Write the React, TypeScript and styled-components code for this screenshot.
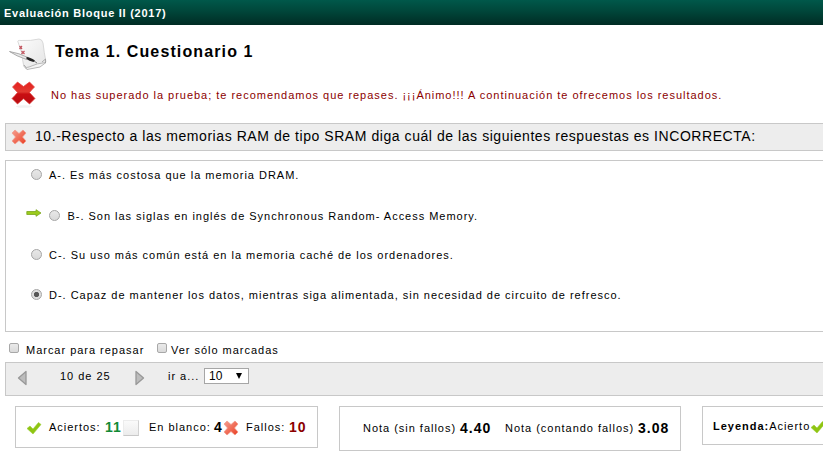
import React from "react";
import styled, { createGlobalStyle } from "styled-components";

const GlobalStyle = createGlobalStyle`
  * { box-sizing: border-box; }
  svg { flex: none; }
  body {
    margin: 0;
    background: #fff;
    overflow: hidden;
    color: #000;
    font: 11px/14px Arial, "Liberation Sans", sans-serif;
    letter-spacing: 0.98px;
  }
`;

const Page = styled.div`
  width: 100%;
  height: 462px;
  overflow: hidden;
  white-space: nowrap;
`;

const Header = styled.header`
  height: 25px;
  padding: 7px 0 0 4px;
  background: linear-gradient(#00584a, #00463a 45%, #002c24);
  color: #fff;
  font-size: 11px;
  line-height: 13px;
  font-weight: bold;
  letter-spacing: 0.74px;
`;

const TitleRow = styled.div`
  display: flex;
  height: 50px;
  padding: 13px 0 0 9px;
`;

const Title = styled.h1`
  margin: 5px 0 0 8px;
  font-size: 16px;
  line-height: 18px;
  letter-spacing: 1.12px;
`;

const Notice = styled.div`
  display: flex;
  height: 48px;
  padding: 5px 0 0 11px;
  color: #8b0000;
`;

const NoticeText = styled.p`
  margin: 8px 0 0 15px;
`;

const Question = styled.div`
  display: flex;
  height: 28px;
  margin-left: 5px;
  padding: 5px 0 0 5px;
  border: 1px solid #c8c8c8;
  border-right: 0;
  background: #ededed;
`;

const QuestionText = styled.h2`
  margin: 0 0 0 8px;
  font-size: 14px;
  font-weight: normal;
  line-height: 15px;
  letter-spacing: 0.56px;
`;

const Options = styled.div`
  height: 172px;
  margin: 9px 0 0 5px;
  padding: 7px 0 0 20px;
  border: 1px solid #c8c8c8;
  border-right: 0;
`;

const Option = styled.label<{ $height: number; $indent: number }>`
  display: flex;
  height: ${(p) => p.$height}px;
  padding-left: ${(p) => p.$indent}px;
`;

const OptionText = styled.span<{ $gap: number }>`
  margin-left: ${(p) => p.$gap}px;
`;

const ArrowSlot = styled.span`
  width: 22.5px;
  height: 14px;
  margin-top: -2px;
`;

const Radio = styled.input.attrs({ type: "radio" })`
  appearance: none;
  flex: none;
  width: 11px;
  height: 11px;
  margin: 0.5px 0 0;
  border: 1px solid #a5a5a5;
  border-radius: 50%;
  background: linear-gradient(#e8e8e8, #d9d9d9);
  &:checked {
    background: radial-gradient(circle, #555 0 2.2px, #dedede 3px);
  }
`;

const Filters = styled.div`
  display: flex;
  height: 30px;
  padding: 11px 0 0 9px;
`;

const FilterLabel = styled.span<{ $left: number; $width: number }>`
  width: ${(p) => p.$width}px;
  margin-left: ${(p) => p.$left}px;
`;

const Checkbox = styled.input.attrs({ type: "checkbox" })`
  appearance: none;
  width: 10px;
  height: 10px;
  margin: 0;
  border: 1px solid #a8a8a8;
  border-radius: 2px;
  background: linear-gradient(#eaeaea, #dadada);
`;

const Pager = styled.nav`
  display: flex;
  height: 34px;
  margin-left: 5px;
  padding: 6px 0 0 11px;
  border: 1px solid #c8c8c8;
  border-right: 0;
  background: #ededed;
`;

const PagerArrow = styled.button`
  width: 11px;
  height: 16px;
  margin: 1px 0 0;
  padding: 0;
  border: 0;
  background: none;
`;

const PagerText = styled.span<{ $left: number; $width: number }>`
  width: ${(p) => p.$width}px;
  margin-left: ${(p) => p.$left}px;
`;

const Select = styled.button`
  display: flex;
  justify-content: space-between;
  width: 45px;
  height: 16px;
  margin-top: -1px;
  padding: 0 6px 0 4px;
  border: 1px solid #a6a6a6;
  background: #fff;
  color: #000;
  font: 12px/14px Arial, "Liberation Sans", sans-serif;
  letter-spacing: 0;
`;

const Caret = styled.span`
  width: 0;
  height: 0;
  margin-top: 4px;
  border: 3.5px solid transparent;
  border-top: 6px solid #000;
  border-bottom: 0;
`;

const Summary = styled.div`
  display: flex;
  align-items: flex-start;
  gap: 21px;
  padding: 10px 0 0 15px;
`;

const Panel = styled.section<{ $width: number; $height: number; $pad: string }>`
  display: flex;
  flex: none;
  width: ${(p) => p.$width}px;
  height: ${(p) => p.$height}px;
  padding: ${(p) => p.$pad};
  border: 1px solid #c8c8c8;
`;

const Label = styled.span<{ $width: number }>`
  flex: none;
  width: ${(p) => p.$width}px;
`;

const Value = styled.b<{ $width: number; $color?: string }>`
  flex: none;
  width: ${(p) => p.$width}px;
  color: ${(p) => p.$color ?? "#000"};
  font-size: 14px;
  letter-spacing: 1px;
`;

const IconSlot = styled.span<{ $width: number }>`
  flex: none;
  width: ${(p) => p.$width}px;
  svg { display: block; }
`;

const Blank = styled.span`
  flex: none;
  width: 16px;
  height: 16px;
  margin-right: 10px;
  border: 1px solid #ececec;
  border-right-color: #d2d2d2;
  border-bottom-color: #c8c8c8;
  background: linear-gradient(#fafafa, #ececec);
`;

const PaperIcon = () => (
  <svg width="38" height="34" viewBox="0 0 38 34">
    <defs>
      <linearGradient id="paper" x2="1" y2="1">
        <stop stopColor="#fcfcfc" />
        <stop offset="1" stopColor="#e4e4e4" />
      </linearGradient>
    </defs>
    <path d="M9 4Q8 2 12 2.500Q22 3 30 1Q33 1 34 5Q35 14 37 24L30 29 17 31Q14 29 14 24Q13 13 9 4Z" fill="url(#paper)" stroke="#cfcfcf" strokeWidth=".8" />
    <path d="M15 27Q17 31 20 29Q28 25 37 24.500L31 29 18 31.500Z" fill="#f4f4f4" stroke="#aaa" strokeWidth=".8" />
    <path d="M33 24 36.500 21V25" fill="none" stroke="#999" strokeWidth=".8" />
    <path d="M10.500 8 13 11M13 8 10.500 11M12.500 13 15.500 16M15.500 13 12.500 16" stroke="#c2555f" strokeWidth="1.2" />
    <path d="M.5 13.500Q10 15 19 19.500L17.500 21.500Q7 18 .5 13.500Z" fill="#e8e8e8" stroke="#999" strokeWidth=".8" />
    <path d="M17.500 19Q21 19 26 22.500L24.500 24Q20 23 17.500 21Z" fill="#222" />
    <path d="M25 23 28 25" stroke="#777" />
  </svg>
);

const BigCross = () => (
  <svg width="25" height="28" viewBox="0 0 25 28">
    <defs>
      <linearGradient id="red" x2="0" y2="1">
        <stop stopColor="#e8201f" />
        <stop offset=".45" stopColor="#e03a30" />
        <stop offset=".55" stopColor="#c90e12" />
        <stop offset="1" stopColor="#b80c12" />
      </linearGradient>
    </defs>
    <ellipse cx="13" cy="26.500" rx="8" ry="1.300" fill="#f2f2f2" />
    <path d="M6.500 2 12.500 6.500 18.500 2 23.500 7Q20.500 10 18.500 12.500L24 18.500 18.500 24 12.500 18.800 6.500 24 1 18.500Q4 15.500 6.500 12.500L1.500 7Z" fill="url(#red)" stroke="#df4640" strokeWidth=".7" strokeLinejoin="round" />
  </svg>
);

const SmallCross = () => (
  <svg width="16" height="16" viewBox="0 0 16 16">
    <defs>
      <linearGradient id="coral" x2="1" y2="1">
        <stop stopColor="#f5a091" />
        <stop offset=".6" stopColor="#ef6650" />
        <stop offset="1" stopColor="#e93d21" />
      </linearGradient>
    </defs>
    <path d="M4 1 8 4.500 12 1 15 4 11.500 8 15 12 12 15 8 11.500 4 15 1 12 4.500 8 1 4Z" fill="url(#coral)" stroke="#f09a8a" strokeWidth=".7" strokeLinejoin="round" />
  </svg>
);

const Check = () => (
  <svg width="16" height="16" viewBox="0 0 16 16">
    <path d="M1 8.500 4 6 7 9 12.500 2.500 15 4.500 7 14Z" fill="#8fc512" stroke="#9ccd34" strokeWidth=".6" />
  </svg>
);

const GreenArrow = () => (
  <svg width="16" height="10" viewBox="0 0 16 10">
    <path d="M.8 3.500H10V1.700L15 5 10 8.300V6.500H.8Z" fill="#9bcb1c" stroke="#7aa51c" strokeWidth=".8" strokeLinejoin="round" />
  </svg>
);

const Triangle = ({ back = false }: { back?: boolean }) => (
  <svg width="11" height="16" viewBox="0 0 11 16">
    <path d={back ? "M9 1.500V14.500L1.500 8Z" : "M2 1.500V14.500L9.500 8Z"} fill="#bcbcbc" stroke="#989898" strokeWidth="1.300" strokeLinejoin="round" />
  </svg>
);

const options = [
  { text: "A-. Es más costosa que la memoria DRAM.", height: 41, indent: 4.5, gap: 7.5 },
  { text: "B-. Son las siglas en inglés de Synchronous Random- Access Memory.", height: 39, indent: 0, gap: 8, correct: true },
  { text: "C-. Su uso más común está en la memoria caché de los ordenadores.", height: 40, indent: 4.5, gap: 7.5 },
  { text: "D-. Capaz de mantener los datos, mientras siga alimentada, sin necesidad de circuito de refresco.", height: 30, indent: 4.5, gap: 7.5, selected: true },
];

export default function App() {
  return (
    <Page>
      <GlobalStyle />
      <Header>Evaluación Bloque II (2017)</Header>
      <TitleRow>
        <PaperIcon />
        <Title>Tema 1. Cuestionario 1</Title>
      </TitleRow>
      <Notice>
        <BigCross />
        <NoticeText>
          No has superado la prueba; te recomendamos que repases. ¡¡¡Ánimo!!! A continuación te ofrecemos los resultados.
        </NoticeText>
      </Notice>
      <Question>
        <SmallCross />
        <QuestionText>10.-Respecto a las memorias RAM de tipo SRAM diga cuál de las siguientes respuestas es INCORRECTA:</QuestionText>
      </Question>
      <Options>
        {options.map((o) => (
          <Option key={o.text} $height={o.height} $indent={o.indent}>
            {o.correct && <ArrowSlot><GreenArrow /></ArrowSlot>}
            <Radio name="answer" defaultChecked={!!o.selected} />
            <OptionText $gap={o.gap}>{o.text}</OptionText>
          </Option>
        ))}
      </Options>
      <Filters>
        <Checkbox />
        <FilterLabel $left={7} $width={131}>Marcar para repasar</FilterLabel>
        <Checkbox />
        <FilterLabel $left={4} $width={130}>Ver sólo marcadas</FilterLabel>
      </Filters>
      <Pager>
        <PagerArrow><Triangle back /></PagerArrow>
        <PagerText $left={32} $width={74}>10 de 25</PagerText>
        <PagerArrow><Triangle /></PagerArrow>
        <PagerText $left={23} $width={36}>ir a...</PagerText>
        <Select>10<Caret /></Select>
      </Pager>
      <Summary>
        <Panel $width={303} $height={42} $pad="13px 0 0 10px">
          <IconSlot $width={23}><Check /></IconSlot>
          <Label $width={56}>Aciertos:</Label>
          <Value $width={18} $color="#128a35">11</Value>
          <Blank />
          <Label $width={65}>En blanco:</Label>
          <Value $width={9}>4</Value>
          <IconSlot $width={23}><SmallCross /></IconSlot>
          <Label $width={43}>Fallos:</Label>
          <Value $width={20} $color="#8b0000">10</Value>
        </Panel>
        <Panel $width={342} $height={45} $pad="14px 0 0 23px">
          <Label $width={97}>Nota (sin fallos)</Label>
          <Value $width={45}>4.40</Value>
          <Label $width={133}>Nota (contando fallos)</Label>
          <Value $width={35}>3.08</Value>
        </Panel>
        <Panel $width={200} $height={39} $pad="12px 0 0 10px">
          <b>Leyenda:</b>
          <span>Acierto</span>
          <Check />
        </Panel>
      </Summary>
    </Page>
  );
}
